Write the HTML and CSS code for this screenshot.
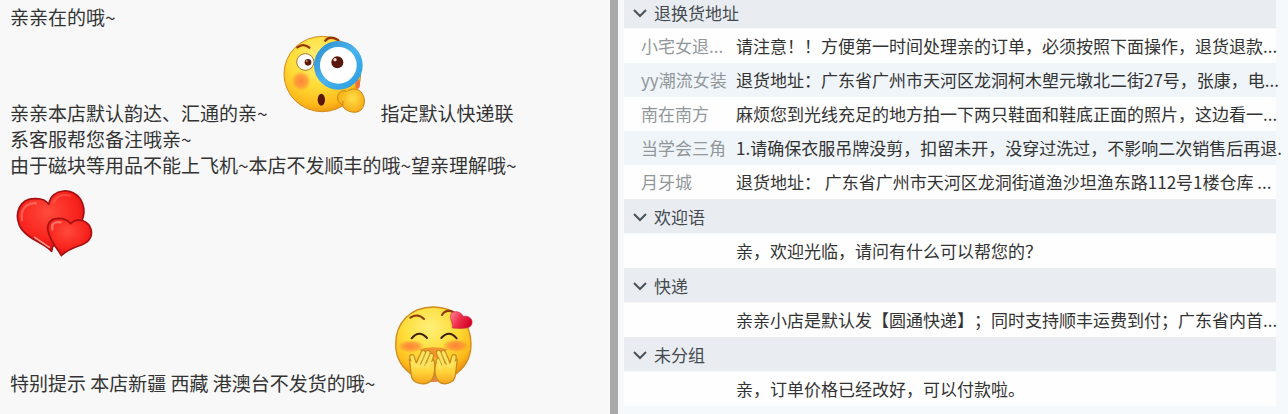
FILE: index.html
```html
<!DOCTYPE html>
<html lang="zh-CN">
<head>
    <meta charset="UTF-8">
    <meta name="viewport" content="width=device-width, initial-scale=1.0">
    <title>快捷回复</title>
    <link rel="stylesheet" href="styles.css">
</head>
<body>
    <div class="chat">
        <p class="line">亲亲在的哦~</p>
        <div class="line line-emoji">
            <span>亲亲本店默认韵达、汇通的亲~</span>
            <svg class="emoji look" viewBox="60 40 261 243" width="87" height="81" role="img" aria-label="放大镜">
                <defs>
                    <radialGradient id="face" cx="45%" cy="30%" r="72%">
                        <stop offset="0" stop-color="#fff07a"/>
                        <stop offset="0.5" stop-color="#ffdd38"/>
                        <stop offset="0.85" stop-color="#fdb91a"/>
                        <stop offset="1" stop-color="#ee9410"/>
                    </radialGradient>
                    <radialGradient id="thumb" cx="45%" cy="40%" r="60%">
                        <stop offset="0" stop-color="#ffe04a"/>
                        <stop offset="1" stop-color="#f8ac16"/>
                    </radialGradient>
                    <linearGradient id="ring" x1="0" y1="0" x2="1" y2="1">
                        <stop offset="0" stop-color="#2f8fd0"/>
                        <stop offset="0.5" stop-color="#48b3ee"/>
                        <stop offset="1" stop-color="#2a9de0"/>
                    </linearGradient>
                    <radialGradient id="blush">
                        <stop offset="0" stop-color="#ff7a3c" stop-opacity="0.9"/>
                        <stop offset="0.6" stop-color="#ff8838" stop-opacity="0.7"/>
                        <stop offset="1" stop-color="#ff9a30" stop-opacity="0"/>
                    </radialGradient>
                </defs>
                <ellipse cx="184" cy="160" rx="115" ry="113" fill="url(#face)" stroke="#d58a1c" stroke-width="3"/>
                <path d="M109 80q18-14 36 1" fill="none" stroke="#9a3208" stroke-width="7" stroke-linecap="round"/>
                <path d="M193 60q14-16 38-2" fill="none" stroke="#9a3208" stroke-width="7" stroke-linecap="round"/>
                <circle cx="120" cy="181" r="30" fill="url(#blush)"/>
                <ellipse cx="290" cy="190" rx="7" ry="14" fill="#f2703a"/>
                <ellipse cx="133" cy="124" rx="26" ry="25" fill="#fff" stroke="#a8762a" stroke-width="3"/>
                <circle cx="141" cy="125" r="10" fill="#5c1a0c"/>
                <circle cx="137" cy="121" r="3" fill="#c98a70"/>
                <circle cx="232" cy="134" r="64" fill="#fff" stroke="url(#ring)" stroke-width="18"/>
                <circle cx="229" cy="125" r="18" fill="#5a170c"/>
                <circle cx="222" cy="117" r="5" fill="#f2dcd4"/>
                <ellipse cx="181" cy="237" rx="11" ry="18" fill="#5a170c"/>
                <ellipse cx="248" cy="231" rx="18" ry="21" fill="#fbb81c" stroke="#c98216" stroke-width="3"/>
                <path d="M262 210C276 201 294 204 303 218C314 234 312 256 300 268C286 280 262 275 249 262C241 251 246 224 262 210Z" fill="url(#thumb)" stroke="#c98216" stroke-width="3"/>
                <path d="M246 238C246 226 252 220 260 214" fill="none" stroke="#fcc42a" stroke-width="6" stroke-linecap="round"/>
            </svg>
            <span>指定默认快递联</span>
        </div>
        <p class="line">系客服帮您备注哦亲~</p>
        <p class="line">由于磁块等用品不能上飞机~本店不发顺丰的哦~望亲理解哦~</p>
        <svg class="emoji hearts" viewBox="42 114 246 216" width="82" height="72" role="img" aria-label="爱心">
            <defs>
                <radialGradient id="heart" cx="45%" cy="35%" r="65%">
                    <stop offset="0" stop-color="#ff4a3c"/>
                    <stop offset="0.7" stop-color="#f8231c"/>
                    <stop offset="1" stop-color="#d80f10"/>
                </radialGradient>
            </defs>
            <path d="M146 163C155 112 221 112 242 148C263 184 247 222 224 242L158 290L155 304L146 296C128 278 76 264 58 226C42 186 62 148 100 146C125 144 140 153 146 163Z" fill="url(#heart)" stroke="#a50f12" stroke-width="5" stroke-linejoin="round"/>
            <path d="M66 210C60 178 80 158 108 160" fill="none" stroke="#ff9186" stroke-width="7" stroke-linecap="round" opacity="0.5"/>
            <path d="M160 158C170 138 190 132 210 137" fill="none" stroke="#ff7a6e" stroke-width="6" stroke-linecap="round" opacity="0.4"/>
            <path d="M104 262L148 292" stroke="#ff9a90" stroke-width="5" stroke-linecap="round"/>
            <path d="M212 221C226 204 258 208 270 230C282 256 268 276 246 284C216 294 198 302 184 317C176 300 154 278 147 252C136 224 150 206 174 205C194 205 206 213 212 221Z" fill="url(#heart)" stroke="#a50f12" stroke-width="5" stroke-linejoin="round"/>
            <path d="M157 238C153 222 164 214 182 217" fill="none" stroke="#ffa196" stroke-width="7" stroke-linecap="round" opacity="0.6"/>
        </svg>
        <div class="line line-emoji last-line">
            <span>特别提示 本店新疆 西藏 港澳台不发货的哦~</span>
            <svg class="emoji shy" viewBox="69 42 246 252" width="82" height="84" role="img" aria-label="害羞">
                <defs>
                    <linearGradient id="petal" x1="0" y1="0" x2="1" y2="0.4">
                        <stop offset="0" stop-color="#ff8a9a"/>
                        <stop offset="0.5" stop-color="#f0304c"/>
                        <stop offset="1" stop-color="#d4062a"/>
                    </linearGradient>
                    <linearGradient id="hand" x1="0" y1="0" x2="0" y2="1">
                        <stop offset="0" stop-color="#ffe76a"/>
                        <stop offset="0.5" stop-color="#ffd53a"/>
                        <stop offset="1" stop-color="#f9a41c"/>
                    </linearGradient>
                </defs>
                <path d="M190 51C258 51 303 98 303 162C303 200 285 236 248 258L132 258C96 236 77 202 77 162C77 98 122 51 190 51Z" fill="url(#face)" stroke="#cf8a20" stroke-width="4"/>
                <path d="M121 83Q144 68 162 87" fill="none" stroke="#8e3a0c" stroke-width="6" stroke-linecap="round"/>
                <path d="M216 75Q226 56 250 66" fill="none" stroke="#8e3a0c" stroke-width="6" stroke-linecap="round"/>
                <path d="M125 145Q148 118 171 144M214 144Q237 118 260 145" fill="none" stroke="#3c2208" stroke-width="6" stroke-linecap="round"/>
                <ellipse cx="123" cy="169" rx="40" ry="19" fill="url(#blush)"/>
                <ellipse cx="257" cy="167" rx="40" ry="19" fill="url(#blush)"/>
                <path d="M148 178Q190 166 232 178L214 204L170 206Z" fill="#f2942c"/>
                <path d="M178 250h24v26h-24z" fill="#e98545"/>
                <path d="M126 201L134 226M160 188L142 228M174 188L156 228M184 197L172 230" fill="none" stroke="#c98a20" stroke-width="17" stroke-linecap="round"/>
                <path d="M252 201L245 226M220 188L237 228M206 188L222 228M205 212L210 232" fill="none" stroke="#c98a20" stroke-width="17" stroke-linecap="round"/>
                <path d="M118 206C128 224 180 222 191 208C197 226 195 244 191 258C186 276 170 283 153 281C134 280 124 268 123 250Z" fill="url(#hand)" stroke="#c98a20" stroke-width="4"/>
                <path d="M262 206C250 224 206 224 199 214C194 230 194 246 197 258C202 276 214 283 229 281C246 279 256 268 257 250Z" fill="url(#hand)" stroke="#c98a20" stroke-width="4"/>
                <path d="M126 201L134 228M160 188L142 230M174 188L156 230M184 197L172 232" fill="none" stroke="#ffe35c" stroke-width="10" stroke-linecap="round"/>
                <path d="M252 201L245 228M220 188L237 230M206 188L222 230M205 212L210 234" fill="none" stroke="#ffe35c" stroke-width="10" stroke-linecap="round"/>
                <path d="M167 189L150 224M180 194L164 226M213 188L230 224M205 200L216 226" fill="none" stroke="#c9a83a" stroke-width="3" stroke-linecap="round"/>
                <path d="M243 71C253 60 275 65 279 79C293 76 309 84 306 100C304 115 286 117 247 114C250 99 237 87 243 71Z" fill="url(#petal)" stroke="#d22a46" stroke-width="2"/>
            </svg>
        </div>
    </div>
    <div class="divider"></div>
    <div class="replies">
        <section class="group">
            <button class="group-header" type="button" aria-expanded="true">
                <svg class="arrow" viewBox="0 0 14 9" width="14" height="9" aria-hidden="true"><path d="M1 1l6 6 6-6"/></svg>
                退换货地址
            </button>
            <table class="reply-table">
                <tr><th scope="row">小宅女退...</th><td>请注意！！方便第一时间处理亲的订单，必须按照下面操作，退货退款...</td></tr>
                <tr><th scope="row">yy潮流女装</th><td>退货地址：广东省广州市天河区龙洞柯木塱元墩北二街27号，张康，电...</td></tr>
                <tr><th scope="row">南在南方</th><td>麻烦您到光线充足的地方拍一下两只鞋面和鞋底正面的照片，这边看一...</td></tr>
                <tr><th scope="row">当学会三角</th><td>1.请确保衣服吊牌没剪，扣留未开，没穿过洗过，不影响二次销售后再退.</td></tr>
                <tr><th scope="row">月牙城</th><td>退货地址： 广东省广州市天河区龙洞街道渔沙坦渔东路112号1楼仓库 ...</td></tr>
            </table>
        </section>
        <section class="group">
            <button class="group-header" type="button" aria-expanded="true">
                <svg class="arrow" viewBox="0 0 14 9" width="14" height="9" aria-hidden="true"><path d="M1 1l6 6 6-6"/></svg>
                欢迎语
            </button>
            <table class="reply-table">
                <tr><th scope="row"></th><td>亲，欢迎光临，请问有什么可以帮您的？</td></tr>
            </table>
        </section>
        <section class="group">
            <button class="group-header" type="button" aria-expanded="true">
                <svg class="arrow" viewBox="0 0 14 9" width="14" height="9" aria-hidden="true"><path d="M1 1l6 6 6-6"/></svg>
                快递
            </button>
            <table class="reply-table">
                <tr><th scope="row"></th><td>亲亲小店是默认发【圆通快递】；同时支持顺丰运费到付；广东省内首...</td></tr>
            </table>
        </section>
        <section class="group">
            <button class="group-header" type="button" aria-expanded="true">
                <svg class="arrow" viewBox="0 0 14 9" width="14" height="9" aria-hidden="true"><path d="M1 1l6 6 6-6"/></svg>
                未分组
            </button>
            <table class="reply-table">
                <tr><th scope="row"></th><td>亲，订单价格已经改好，可以付款啦。</td></tr>
            </table>
        </section>
    </div>

    <script>
        document.querySelectorAll('.group-header').forEach(header => {
            header.onclick = () => {
                const table = header.nextElementSibling;
                table.hidden = !table.hidden;
                header.setAttribute('aria-expanded', !table.hidden);
            };
        });
    </script>
</body>
</html>
```
FILE: styles.css
```css
* {
    box-sizing: border-box;
}

body {
    display: grid;
    grid-template-columns: 610fr 8px 670fr;
    height: 100vh;
    margin: 0;
    overflow: hidden;
    background-color: #f8f8f9;
    font-family: "Noto Sans CJK SC", sans-serif;
    text-spacing-trim: space-all;
    color: #333;
}

.chat {
    min-width: 0;
    padding: 4px 10px;
    font-size: 19px;
    line-height: 26px;
    white-space: nowrap;
}

.line {
    margin: 0;
}

.line-emoji {
    display: flex;
    align-items: flex-end;
    padding-top: 4px;
}

.emoji {
    display: block;
    flex: none;
}

.look {
    margin: 0 13px 11px;
}

.hearts {
    margin: 10px 4px 0;
}

.last-line {
    margin-top: 40px;
}

.shy {
    margin: 0 18px 8px;
}

.divider {
    background-color: #a9a9aa;
}

.replies {
    min-width: 0;
    padding: 0 12px 0 6px;
    overflow: hidden;
    background-color: #f6f9fc;
    font-size: 17px;
    line-height: 26px;
}

.group-header {
    display: flex;
    align-items: center;
    gap: 7px;
    width: 100%;
    padding: 5px 9px 3px;
    border: none;
    border-bottom: 1px solid #f6f8fa;
    background-color: #e9edf2;
    color: #444a50;
    font: inherit;
    text-align: left;
    cursor: pointer;
}

/* the top header sits against the edge of the panel */
.group:first-child .group-header {
    padding-top: 0;
    padding-bottom: 2px;
}

.arrow {
    fill: none;
    stroke: #4a525a;
    stroke-width: 2;
}

.reply-table {
    width: 100%;
    table-layout: fixed;
    border-collapse: collapse;
    background-color: #fefefe;
}

.reply-table tr:nth-child(even) {
    background-color: #eff5f9;
}

.reply-table th,
.reply-table td {
    padding: 4px 0;
    height: 34px;
    font-weight: normal;
    text-align: left;
    white-space: nowrap;
}

.reply-table th {
    width: 112px;
    padding-left: 17px;
    color: #92979b;
}
```
